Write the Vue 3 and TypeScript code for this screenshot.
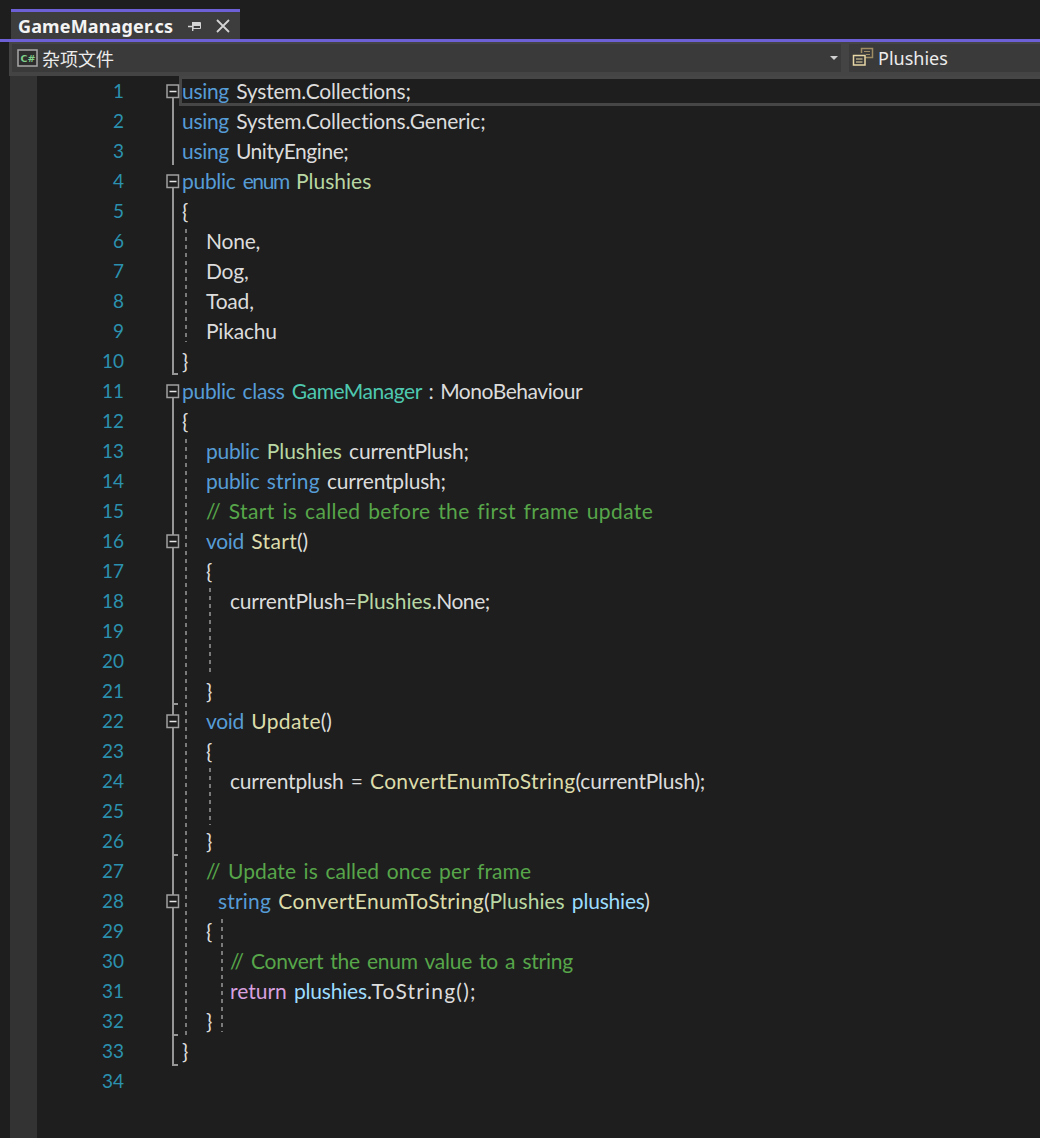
<template>
  <div class="ide">
    <!-- 标签栏 -->
    <div class="tab-strip">
      <div class="tab">
        <span class="tab-name">GameManager.cs</span>
        <svg class="pin" width="13" height="12" viewBox="0 0 13 12">
          <path d="M0 6.5h4M4.7 2v9" fill="none" stroke="#d4d4d4" stroke-width="1.4" />
          <path d="M5 2.5h7.5v6H5z" fill="none" stroke="#d4d4d4" stroke-width="1" />
          <path d="M5 3h7.5v3H5z" fill="#d4d4d4" />
        </svg>
        <svg class="close" width="14" height="14" viewBox="0 0 14 14">
          <path d="M1 1l12 12M13 1L1 13" fill="none" stroke="#d4d4d4" stroke-width="1.8" />
        </svg>
      </div>
    </div>

    <!-- 导航栏 -->
    <div class="nav-bar">
      <div class="nav-left">
        <svg class="cs-icon" width="21" height="18" viewBox="0 0 21 18">
          <rect x="1" y="1" width="19" height="16" fill="#2d2d2d" stroke="#a8a8a8" stroke-width="1.5" />
          <text x="3.5" y="13" class="cs-text">C#</text>
        </svg>
        <span class="nav-text cjk">杂项文件</span>
        <span class="caret"></span>
      </div>
      <div class="nav-right">
        <svg width="24" height="22" viewBox="0 0 24 22">
          <path d="M10.5 6V1.5h11v9H14" fill="none" stroke="#a08c64" stroke-width="1.5" />
          <path d="M13 4.5h6M15 7.5h4" stroke="#a08c64" stroke-width="1.2" />
          <rect x="2.5" y="8.5" width="11.5" height="9.5" fill="#3a3a3a" stroke="#e8d7a6" stroke-width="1.5" />
          <path d="M5 12h6.5M5 15h6.5" stroke="#e8d7a6" stroke-width="1.2" />
        </svg>
        <span class="nav-text">Plushies</span>
      </div>
    </div>

    <!-- 编辑器 -->
    <div class="editor">
      <div class="glyph-margin"></div>
      <div class="code">
        <div v-for="(line, i) in lines" :key="i" class="row">
          <span class="num">{{ i + 1 }}</span>
          <span class="text" :style="{ paddingLeft: line.indent * 6 + 'px' }">
            <span v-for="(t, j) in line.tokens" :key="j" :class="t[1]">{{ t[0] }}</span>
          </span>
        </div>

        <!-- 当前行框 -->
        <div class="current-line"></div>

        <!-- 折叠线、缩进参考线 -->
        <svg class="guides" width="1003" height="1062" viewBox="37 76 1003 1062">
          <path
            v-for="g in indentGuides"
            :key="g.x + '-' + g.y1"
            :d="`M${g.x} ${g.y1}V${g.y2}`"
            stroke="#7a7a7a"
            stroke-width="2"
            stroke-dasharray="4 4"
          />
          <path v-for="(f, i) in foldLines" :key="i" :d="f" fill="none" stroke="#969696" stroke-width="2" />
          <g v-for="y in foldBoxes" :key="y">
            <rect x="167" :y="y - 6" width="11.5" height="12.5" fill="#1e1e1e" stroke="#a0a0a0" stroke-width="1.5" />
            <path :d="`M169.5 ${y + 0.5}h7`" stroke="#e4e4e4" stroke-width="1.5" />
          </g>
        </svg>
      </div>
    </div>
  </div>
</template>

<script setup lang="ts">
  type Token = [string, string];

  interface Line {
    indent: number;
    tokens: Token[];
  }

  const l = (indent: number, ...tokens: Token[]): Line => ({ indent, tokens });

  const lines: Line[] = [
    l(0, ['using', 'kw'], [' System.Collections;', 'pl']),
    l(0, ['using', 'kw'], [' System.Collections.Generic;', 'pl']),
    l(0, ['using', 'kw'], [' UnityEngine;', 'pl narrow']),
    l(0, ['public', 'kw'], [' ', 'pl'], ['enum', 'kw squeezed'], [' ', 'pl'], ['Plushies', 'en']),
    l(0, ['{', 'pl']),
    l(4, ['None,', 'pl']),
    l(4, ['Dog,', 'pl']),
    l(4, ['Toad,', 'pl']),
    l(4, ['Pikachu', 'pl']),
    l(0, ['}', 'pl']),
    l(0, ['public class', 'kw'], [' ', 'pl'], ['GameManager', 'cl'], [' : MonoBehaviour', 'pl narrow']),
    l(0, ['{', 'pl']),
    l(4, ['public', 'kw'], [' ', 'pl'], ['Plushies', 'en'], [' currentPlush;', 'pl']),
    l(4, ['public', 'kw'], [' ', 'pl'], ['string', 'kw str'], [' currentplush;', 'pl']),
    l(4, ['// Start is called before the first frame update', 'cm wide']),
    l(4, ['void', 'kw'], [' ', 'pl'], ['Start', 'fn'], ['()', 'pl']),
    l(4, ['{', 'pl']),
    l(8, ['currentPlush=', 'pl'], ['Plushies', 'en'], ['.None;', 'pl narrow']),
    l(0),
    l(0),
    l(4, ['}', 'pl']),
    l(4, ['void', 'kw'], [' ', 'pl'], ['Update', 'fn'], ['()', 'pl']),
    l(4, ['{', 'pl']),
    l(8, ['currentplush = ', 'pl'], ['ConvertEnumToString', 'fn'], ['(currentPlush);', 'pl']),
    l(0),
    l(4, ['}', 'pl']),
    l(4, ['// Update is called once per frame', 'cm']),
    l(6, ['string', 'kw str'], [' ', 'pl'], ['ConvertEnumToString', 'fn'], ['(', 'pl'], ['Plushies', 'en'], [' ', 'pl'], ['plushies', 'pa'], [')', 'pl']),
    l(4, ['{', 'pl']),
    l(8, ['// Convert the enum value to a string', 'cm tight']),
    l(8, ['return', 'rt'], [' ', 'pl'], ['plushies', 'pa'], ['.ToString();', 'pl loose']),
    l(4, ['}', 'pl']),
    l(0, ['}', 'pl']),
    l(0)
  ];

  const rowY = (n: number) => 76 + (n - 1) * 30;

  const indentGuides = [
    { x: 186, y1: rowY(6) + 3, y2: rowY(10) - 4 },
    { x: 186, y1: rowY(13) + 3, y2: rowY(33) },
    { x: 210, y1: rowY(18) + 2, y2: rowY(21) - 1 },
    { x: 210, y1: rowY(24) + 2, y2: rowY(26) - 1 },
    { x: 222, y1: rowY(29) + 3, y2: rowY(33) - 4 }
  ];

  // 折叠线
  const foldLines = [
    `M173 ${rowY(1) + 22}V${rowY(4) - 1}`,
    `M173 ${rowY(4) + 22}V${rowY(11) - 2}h5`,
    `M173 ${rowY(11) + 22}V${rowY(34) - 1}h5`,
    `M173 ${rowY(21) + 28}h5`,
    `M173 ${rowY(26) + 29}h5`,
    `M173 ${rowY(32) + 29}h5`
  ];

  const foldBoxes = [1, 4, 11, 16, 22, 28].map((n) => rowY(n) + 15);
</script>

<style>
  html,
  body {
    margin: 0;
    background: #1e1e1e;
  }
</style>

<style scoped>
  .ide {
    width: 1040px;
    height: 1138px;
    overflow: hidden;
    background: #1e1e1e;
    display: flex;
    flex-direction: column;
    font-family: "Lato", "Noto Sans CJK SC", sans-serif;
  }

  .tab-strip {
    box-sizing: border-box;
    height: 42px;
    padding: 9px 0 0 11px;
    border-bottom: 3px solid #6d5fd5;
  }

  .tab {
    box-sizing: border-box;
    width: 229px;
    height: 30px;
    border-top: 3px solid #6d5fd5;
    background: #3d3d3d;
    display: flex;
    align-items: center;
    padding-left: 7px;
  }

  .tab-name {
    font-family: "Noto Sans", sans-serif;
    font-weight: 700;
    font-size: 18px;
    letter-spacing: 0.15px;
    color: #f4f4f4;
  }

  .pin {
    margin-left: 15px;
  }

  .close {
    margin-left: 15px;
  }

  .nav-bar {
    box-sizing: border-box;
    height: 34px;
    margin-left: 9px;
    background: #444444;
    padding: 2px 0 4px 3px;
    display: flex;
  }

  .nav-left {
    width: 829px;
    display: flex;
    align-items: center;
    background: #3a3a3a;
  }

  .cs-icon {
    margin-left: 5px;
  }

  .cs-text {
    font-family: "DejaVu Sans", sans-serif;
    font-size: 9.5px;
    font-weight: 700;
    fill: #7fd08a;
  }

  .nav-text {
    font-family: "Noto Sans", "Noto Sans CJK SC", sans-serif;
    font-size: 18px;
    color: #ececec;
    margin-left: 3px;
  }

  .nav-text.cjk {
    margin-left: 4px;
  }

  .caret {
    margin-left: auto;
    margin-right: 3px;
    width: 0;
    height: 0;
    border-left: 4px solid transparent;
    border-right: 4px solid transparent;
    border-top: 4px solid #d0d0d0;
  }

  .nav-right {
    flex: 1;
    margin-left: 8px;
    display: flex;
    align-items: center;
    background: #3a3a3a;
    padding-left: 2px;
  }

  .editor {
    flex: 1;
    display: flex;
    padding-left: 10px;
  }

  .glyph-margin {
    width: 27px;
    background: #333333;
  }

  .code {
    flex: 1;
    position: relative;
  }

  .row {
    box-sizing: border-box;
    height: 30px;
    padding-bottom: 2px;
    display: flex;
    align-items: center;
    font-size: 21px;
    word-spacing: 2px;
    white-space: pre;
  }

  .num {
    width: 87px;
    text-align: right;
    font-size: 19px;
    color: #2b91af;
    flex-shrink: 0;
  }

  .text {
    margin-left: 58px;
    color: #dcdcdc;
  }

  .current-line {
    position: absolute;
    left: 142px;
    right: 0;
    top: 0;
    height: 30px;
    box-sizing: border-box;
    border: 3px solid #464646;
    border-right: none;
  }

  .guides {
    position: absolute;
    left: 0;
    top: 0;
    pointer-events: none;
  }

  /* Lato 比原字体窄或宽的地方，用字距补回来 */
  .kw {
    color: #569cd6;
    letter-spacing: -0.3px;
  }

  .kw.squeezed {
    letter-spacing: -1.4px;
  }

  .kw.str {
    letter-spacing: 0.2px;
  }

  .pl {
    color: #dcdcdc;
    letter-spacing: -0.2px;
  }

  .pl.narrow {
    letter-spacing: -0.45px;
  }

  .pl.loose {
    letter-spacing: 1.2px;
  }

  .en {
    color: #b8d7a3;
  }

  .cl {
    color: #4ec9b0;
    letter-spacing: -0.45px;
  }

  .fn {
    color: #dcdcaa;
    letter-spacing: 0.34px;
  }

  .cm {
    color: #57a64a;
    letter-spacing: 0.1px;
  }

  .cm.wide {
    letter-spacing: 0.37px;
  }

  .cm.tight {
    letter-spacing: -0.25px;
  }

  .pa {
    color: #9cdcfe;
    letter-spacing: -0.2px;
  }

  .rt {
    color: #d8a0df;
  }
</style>
